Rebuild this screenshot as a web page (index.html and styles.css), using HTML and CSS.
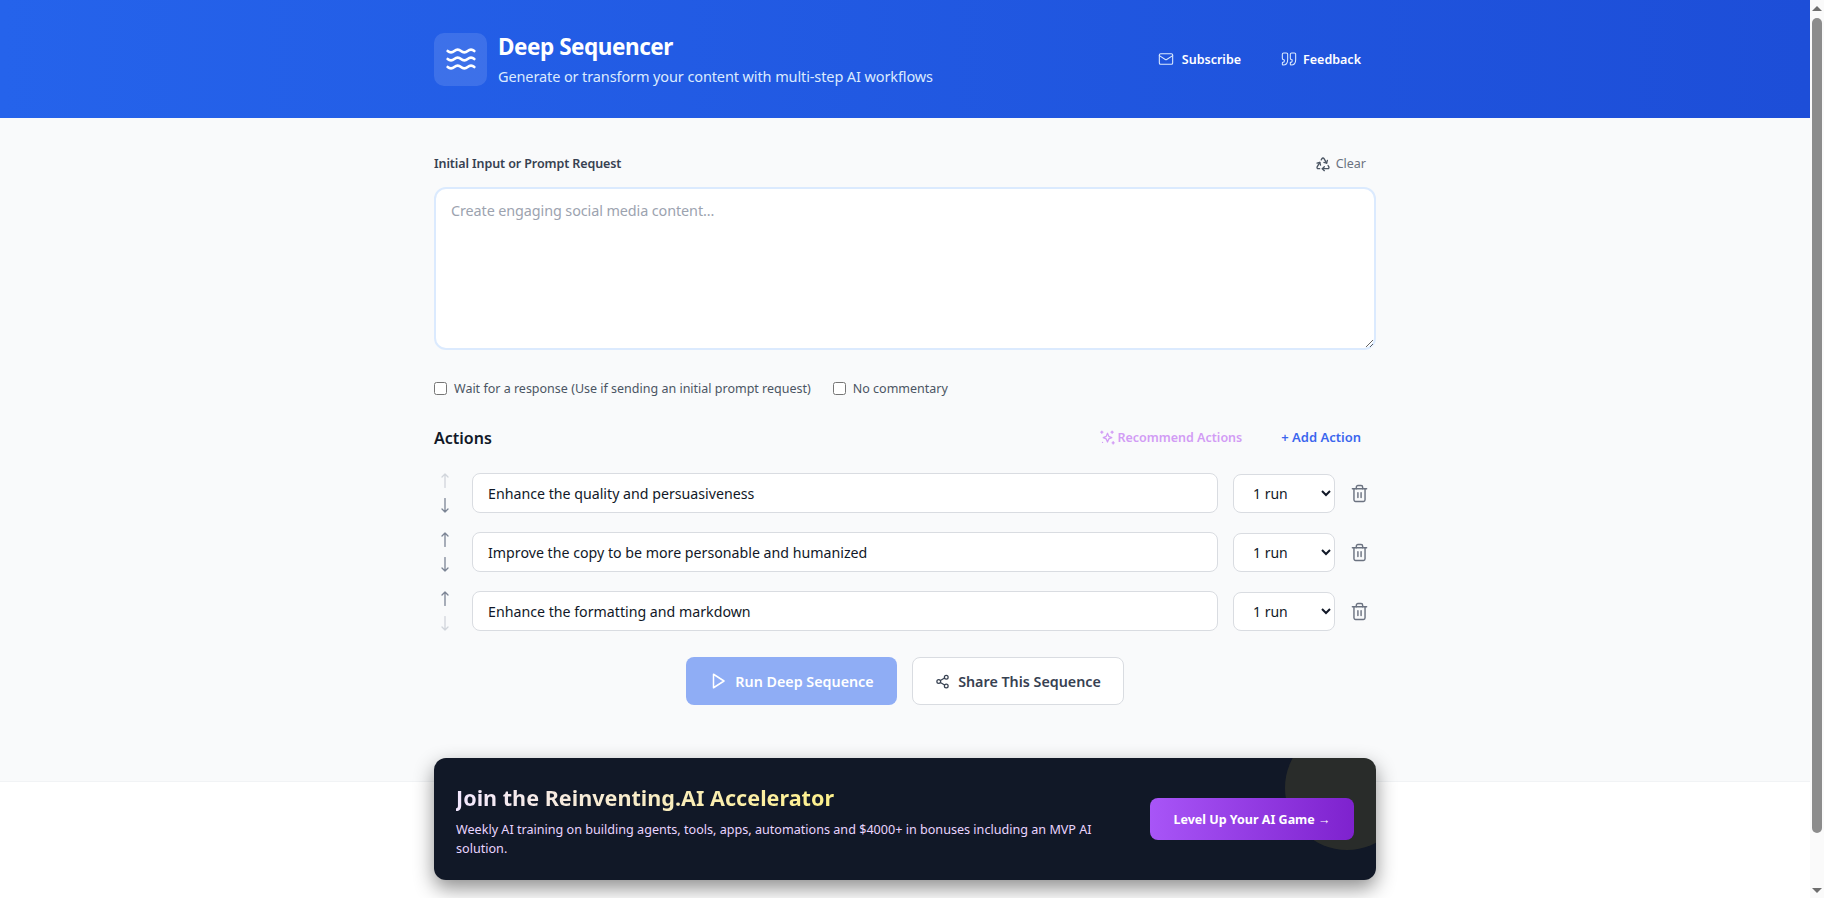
FILE: index.html
```html
<!DOCTYPE html>
<html lang="en">
<head>
<meta charset="utf-8">
<title>Deep Sequencer</title>
<link rel="stylesheet" href="styles.css">
</head>
<body>
<div class="page">
  <header class="hero">
    <div class="hero-inner">
      <div class="brand">
        <div class="logo">
          <svg class="i-logo" viewBox="0 0 24 24"><path d="M2 6c.6.5 1.2 1 2.5 1C7 7 7 5 9.5 5c2.6 0 2.4 2 5 2 2.5 0 2.5-2 5-2 1.3 0 1.9.5 2.5 1"/><path d="M2 12c.6.5 1.2 1 2.5 1 2.5 0 2.5-2 5-2 2.6 0 2.4 2 5 2 2.5 0 2.5-2 5-2 1.3 0 1.9.5 2.5 1"/><path d="M2 18c.6.5 1.2 1 2.5 1 2.5 0 2.5-2 5-2 2.6 0 2.4 2 5 2 2.5 0 2.5-2 5-2 1.3 0 1.9.5 2.5 1"/></svg>
        </div>
        <div>
          <h1 class="title">Deep Sequencer</h1>
          <p class="subtitle">Generate or transform your content with multi-step AI workflows</p>
        </div>
      </div>
      <nav class="nav">
        <a class="nav-link"><svg class="i-nav" viewBox="0 0 24 24"><rect x="2" y="4" width="20" height="16" rx="2"/><path d="m22 7-8.97 5.7a1.94 1.94 0 0 1-2.06 0L2 7"/></svg>Subscribe</a>
        <a class="nav-link nav-link-tight"><svg class="i-nav" viewBox="0 0 24 24"><path d="M3 21c3 0 7-1 7-8V5c0-1.25-.756-2.017-2-2H4c-1.25 0-2 .75-2 1.972V11c0 1.25.75 2 2 2 1 0 1 0 1 1v1c0 1-1 2-2 2s-1 .008-1 1.031V20c0 1 0 1 1 1z"/><path d="M15 21c3 0 7-1 7-8V5c0-1.25-.757-2.017-2-2h-4c-1.25 0-2 .75-2 1.972V11c0 1.25.75 2 2 2h.75c0 2.25.25 4-2.75 4v3c0 1 0 1 1 1z"/></svg>Feedback</a>
      </nav>
    </div>
  </header>
  <main class="main">
    <div class="column">
      <div class="input-head">
        <label class="input-label">Initial Input or Prompt Request</label>
        <button class="clear"><svg class="i-clear" viewBox="0 0 24 24"><path d="M7 19H4.815a1.83 1.83 0 0 1-1.57-.881 1.785 1.785 0 0 1-.004-1.784L7.196 9.5"/><path d="M11 19h8.203a1.83 1.83 0 0 0 1.556-.89 1.784 1.784 0 0 0 0-1.775l-1.226-2.12"/><path d="m14 16-3 3 3 3"/><path d="M8.293 13.596 7.196 9.5 3.1 10.598"/><path d="m9.344 5.811 1.093-1.892A1.83 1.83 0 0 1 11.985 3a1.784 1.784 0 0 1 1.546.888l3.943 6.843"/><path d="m13.378 9.633 4.096 1.098 1.097-4.096"/></svg>Clear</button>
      </div>
      <textarea class="prompt" placeholder="Create engaging social media content..."></textarea>
      <div class="options">
        <label class="option"><input type="checkbox">Wait for a response (Use if sending an initial prompt request)</label>
        <label class="option"><input type="checkbox">No commentary</label>
      </div>
      <div class="actions-head">
        <h2 class="actions-title">Actions</h2>
        <div class="actions-tools">
          <button class="tool tool-recommend"><svg class="i-spark" viewBox="0 0 24 24"><path d="M12 6l1.8 4.4L18 12.2l-4.2 1.8L12 18.4l-1.8-4.4L6 12.2l4.2-1.8z"/><path d="M4 3v3"/><path d="M2.500 4.500h3"/><path d="M18.500 3v3"/><path d="M17 4.500h3"/><path d="M20 18v3"/><path d="M18.500 19.500h3"/><path d="M5 19h.01"/></svg>Recommend Actions</button>
          <button class="tool tool-add">+ Add Action</button>
        </div>
      </div>
      <div class="rows">
        <div class="row">
          <div class="arrows"><svg class="arrow off" viewBox="0 0 10 15"><path d="M5 14.500V1M2 4l3-3 3 3"/></svg><svg class="arrow" viewBox="0 0 10 15"><path d="M5 .5V14M2 11l3 3 3-3"/></svg></div>
          <input class="action" type="text" value="Enhance the quality and persuasiveness">
          <select class="runs"><option>1 run</option></select>
          <svg class="i-trash" viewBox="0 0 24 24"><path d="M3 6h18"/><path d="M19 6v14c0 1-1 2-2 2H7c-1 0-2-1-2-2V6"/><path d="M8 6V4c0-1 1-2 2-2h4c1 0 2 1 2 2v2"/><path d="M10 11v6"/><path d="M14 11v6"/></svg>
        </div>
        <div class="row">
          <div class="arrows"><svg class="arrow" viewBox="0 0 10 15"><path d="M5 14.500V1M2 4l3-3 3 3"/></svg><svg class="arrow" viewBox="0 0 10 15"><path d="M5 .5V14M2 11l3 3 3-3"/></svg></div>
          <input class="action" type="text" value="Improve the copy to be more personable and humanized">
          <select class="runs"><option>1 run</option></select>
          <svg class="i-trash" viewBox="0 0 24 24"><path d="M3 6h18"/><path d="M19 6v14c0 1-1 2-2 2H7c-1 0-2-1-2-2V6"/><path d="M8 6V4c0-1 1-2 2-2h4c1 0 2 1 2 2v2"/><path d="M10 11v6"/><path d="M14 11v6"/></svg>
        </div>
        <div class="row">
          <div class="arrows"><svg class="arrow" viewBox="0 0 10 15"><path d="M5 14.500V1M2 4l3-3 3 3"/></svg><svg class="arrow off" viewBox="0 0 10 15"><path d="M5 .5V14M2 11l3 3 3-3"/></svg></div>
          <input class="action" type="text" value="Enhance the formatting and markdown">
          <select class="runs"><option>1 run</option></select>
          <svg class="i-trash" viewBox="0 0 24 24"><path d="M3 6h18"/><path d="M19 6v14c0 1-1 2-2 2H7c-1 0-2-1-2-2V6"/><path d="M8 6V4c0-1 1-2 2-2h4c1 0 2 1 2 2v2"/><path d="M10 11v6"/><path d="M14 11v6"/></svg>
        </div>
      </div>
      <div class="cta">
        <button class="btn btn-run"><svg class="i-btn" viewBox="0 0 24 24"><polygon points="6 3 20 12 6 21 6 3"/></svg>Run Deep Sequence</button>
        <button class="btn btn-share"><svg class="i-share" viewBox="0 0 24 24"><circle cx="18" cy="5" r="3"/><circle cx="6" cy="12" r="3"/><circle cx="18" cy="19" r="3"/><path d="m8.59 13.51 6.83 3.98"/><path d="m15.41 6.51-6.82 3.98"/></svg>Share This Sequence</button>
      </div>
    </div>
  </main>
  <footer class="foot"></footer>
  <aside class="promo">
    <span class="promo-glow"></span>
    <div class="promo-text">
      <h3 class="promo-title">Join the Reinventing.AI Accelerator</h3>
      <p class="promo-desc">Weekly AI training on building agents, tools, apps, automations and $4000+ in bonuses including an MVP AI solution.</p>
    </div>
    <a class="promo-btn">Level Up Your AI Game →</a>
  </aside>
</div>
<div class="scrollbar">
  <span class="sb-up"></span>
  <span class="sb-thumb"></span>
  <span class="sb-down"></span>
</div>
</body>
</html>
```
FILE: styles.css
```css
* { box-sizing: border-box; }
html, body { height: 100%; margin: 0; }
body {
  display: flex;
  overflow: hidden;
  font-family: "Noto Sans", "Open Sans", sans-serif;
  background: #fff;
  color: #111827;
}
svg { fill: none; stroke: currentColor; stroke-width: 2; stroke-linecap: round; stroke-linejoin: round; flex: none; }
button { font-family: inherit; border: 0; background: none; padding: 0; }

.page { position: relative; flex: 1; min-width: 0; display: flex; flex-direction: column; }

.hero { height: 118px; background: linear-gradient(90deg, #2563eb, #1d4ed8); color: #fff; }
.hero-inner { width: 942px; margin: 0 auto; height: 100%; display: flex; align-items: center; justify-content: space-between; }
.brand { display: flex; align-items: center; gap: 11px; }
.logo { width: 53px; height: 53px; border-radius: 10px; background: rgba(255,255,255,.12); display: flex; align-items: center; justify-content: center; }
.i-logo { width: 32px; height: 32px; }
.title { margin: 1px 0 0; font-size: 22.5px; line-height: 30px; font-weight: 700; letter-spacing: -.45px; }
.subtitle { margin: 3px 0 0; font-size: 14.5px; line-height: 22px; color: #dbeafe; letter-spacing: -.11px; }
.nav { display: flex; gap: 40px; padding-right: 15px; }
.nav-link { display: flex; align-items: center; gap: 8px; font-size: 12.5px; font-weight: 600; color: #fff; }
.nav-link-tight { gap: 6px; }
.i-nav { width: 16px; height: 16px; color: #dbeafe; stroke-width: 1.6; }

.main { flex: 1; background: #f9fafb; border-bottom: 1px solid #f1f3f5; }
.column { width: 942px; margin: 0 auto; padding-top: 34px; }
.input-head { display: flex; justify-content: space-between; align-items: center; height: 23px; padding-right: 10px; }
.input-label { font-size: 12.5px; font-weight: 600; color: #374151; letter-spacing: -.1px; }
.clear { display: flex; align-items: center; gap: 5px; font-size: 12.5px; color: #6b7280; }
.i-clear { width: 16px; height: 16px; color: #4b5563; }
.prompt { display: block; width: 100%; height: 163px; margin-top: 12px; padding: 11px 15px; border: 2px solid #dbeafe; border-radius: 12px; background: #fff; font: 14.4px/1.5 "Noto Sans", sans-serif; letter-spacing: -.1px; outline: 0; }
.prompt::placeholder { color: #9ca3af; opacity: 1; }

.options { display: flex; gap: 22px; margin-top: 28px; height: 20px; align-items: center; }
.option { display: flex; align-items: center; gap: 7px; font-size: 12.5px; color: #4b5563; }
.option input { width: 13px; height: 13px; margin: 0; }

.actions-head { display: flex; justify-content: space-between; align-items: center; margin-top: 28px; height: 24px; }
.actions-title { margin: 0; font-size: 16px; font-weight: 600; color: #111827; }
.actions-tools { display: flex; gap: 39px; padding-right: 15px; margin-top: -2px; }
.tool { display: flex; align-items: center; gap: 1px; font-size: 13px; font-weight: 600; }
.tool-recommend { color: #d29cf5; font-size: 12.5px; }
.tool-add { color: #3b66ee; }
.i-spark { width: 17px; height: 17px; stroke-width: 1.8; }

.rows { display: flex; flex-direction: column; gap: 19px; margin-top: 23px; }
.row { display: flex; align-items: center; height: 40px; }
.arrows { width: 22px; margin-right: 16px; display: flex; flex-direction: column; align-items: center; gap: 10px; }
.arrow { width: 10px; height: 15px; color: #7b8494; stroke-width: 1.3; }
.arrow.off { color: #d1d5db; }
.action { flex: 1; min-width: 0; height: 40px; padding: 0 15px; border: 1px solid #d9dce1; border-radius: 8px; background: #fff; font: 14.2px "Noto Sans", sans-serif; color: #111827; outline: 0; }
.runs { width: 102px; height: 39px; margin-left: 15px; padding-left: 15px; border: 1px solid #d9dce1; border-radius: 8px; background: #fff; font: 14px "Noto Sans", sans-serif; color: #111827; }
.i-trash { width: 19px; height: 19px; margin: 0 7px 0 15px; color: #6b7280; stroke-width: 1.8; }

.cta { display: flex; justify-content: center; gap: 15px; margin-top: 26px; }
.btn { display: flex; align-items: center; justify-content: center; height: 48px; width: 212px; border-radius: 8px; font-size: 14.3px; font-weight: 600; gap: 8px; }
.btn-run { width: 211px; background: #8fadf5; color: #fff; }
.btn-share { background: #fff; border: 1px solid #d9dce1; color: #374151; }
.i-btn { width: 18px; height: 18px; }
.i-share { width: 15px; height: 15px; }

.foot { height: 116px; background: #fff; }

.promo { position: absolute; left: 434px; top: 758px; width: 942px; height: 122px; padding: 0 22px; display: flex; align-items: center; justify-content: space-between; gap: 20px; border-radius: 12px; background: #111827; overflow: hidden; box-shadow: 0 8px 20px rgba(0,0,0,.45); }
.promo-glow { position: absolute; right: -33px; top: -32px; width: 124px; height: 124px; border-radius: 50%; background: rgba(253,224,71,.1); }
.promo-text { position: relative; width: 670px; padding-top: 3px; }
.promo-title { margin: 0; font-size: 21.6px; line-height: 28px; font-weight: 700; background: linear-gradient(90deg, #f3e8ff, #fef08a); -webkit-background-clip: text; background-clip: text; color: transparent; width: max-content; }
.promo-desc { margin: 8px 0 0; font-size: 12.6px; line-height: 19px; color: #e9d5ff; }
.promo-btn { position: relative; flex: none; width: 204px; height: 42px; display: flex; align-items: center; justify-content: center; border-radius: 8px; background: linear-gradient(90deg, #a855f7, #7e22ce); color: #fff; font-size: 12.5px; font-weight: 700; }

.scrollbar { flex: none; width: 14px; height: 100%; background: #fafafa; position: relative; display: flex; flex-direction: column; align-items: center; }
.sb-thumb { width: 10px; height: 815px; margin-top: 7px; border-radius: 5px; background: #8c8c8c; }
.sb-up { margin-top: 6px; width: 0; height: 0; border: solid transparent; border-width: 0 5px 5px; border-bottom-color: #6e6e6e; }
.sb-down { position: absolute; bottom: 5px; width: 0; height: 0; border: solid transparent; border-width: 5px 5px 0; border-top-color: #6e6e6e; }
```
